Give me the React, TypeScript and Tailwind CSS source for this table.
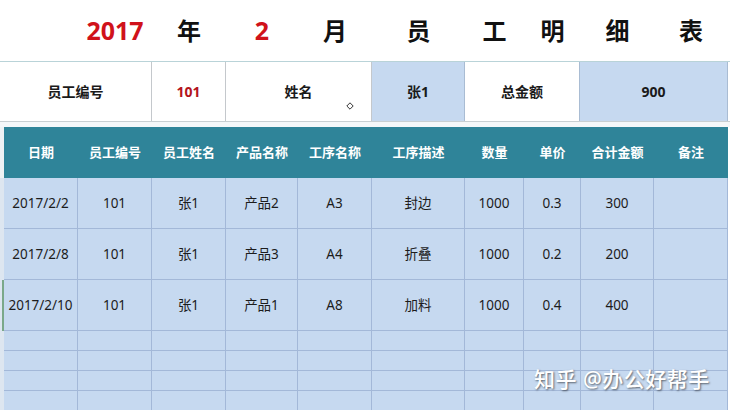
import { Fragment } from "react";

const grid =
  "grid grid-cols-[4px_74px_74px_74px_72px_74px_93px_59px_57px_73px_74px_2px]";

const headers = ["日期", "员工编号", "员工姓名", "产品名称", "工序名称", "工序描述", "数量", "单价", "合计金额", "备注"];

const rows = [
  ["2017/2/2", "101", "张1", "产品2", "A3", "封边", "1000", "0.3", "300", ""],
  ["2017/2/8", "101", "张1", "产品3", "A4", "折叠", "1000", "0.2", "200", ""],
  ["2017/2/10", "101", "张1", "产品1", "A8", "加料", "1000", "0.4", "400", ""],
];

const title: { text: string; red?: boolean }[] = [
  { text: "" },
  { text: "2017", red: true },
  { text: "年" },
  { text: "2", red: true },
  { text: "月" },
  { text: "员" },
  { text: "工" },
  { text: "明" },
  { text: "细" },
  { text: "表" },
];

const font = { fontFamily: '"Noto Sans", "Noto Sans CJK SC", sans-serif' };

export default function App() {
  return (
    <div className="w-[730px] h-[410px] overflow-hidden bg-white relative" style={font}>
      {/* Title row */}
      <div className={`${grid} h-[62px] border-b border-[#b9d3d8]`}>
        <div />
        {title.map((t, i) => (
          <div
            key={i}
            className={`flex items-center justify-center font-bold ${
              t.red ? "text-[#d0121b] text-[25px]" : "text-[#111] text-[24px]"
            }`}
          >
            {t.text}
          </div>
        ))}
        <div />
      </div>

      {/* Info row */}
      <div className="flex h-[60px] border-b border-[#c8cfd2] text-[14px] font-bold text-[#1a1a1a]">
        <div className="w-[152px] flex items-center justify-center border-r border-[#c4c8cc]">员工编号</div>
        <div className="w-[74px] flex items-center justify-center border-r border-[#c4c8cc] text-[#b3141c]">101</div>
        <div className="w-[146px] flex items-center justify-center border-r border-[#c4c8cc] relative">
          姓名
          <svg className="absolute left-[120px] top-[40px]" width="8" height="8" viewBox="0 0 8 8">
            <path d="M4 0.8 L7.2 4 L4 7.2 L0.8 4 Z" fill="white" stroke="#333" strokeWidth="1" />
          </svg>
        </div>
        <div className="w-[93px] flex items-center justify-center border-r border-[#a9bcd3] bg-[#c6d9f0]">张1</div>
        <div className="w-[115px] flex items-center justify-center border-r border-[#a9bcd3]">总金额</div>
        <div className="w-[148px] flex items-center justify-center border-r border-[#a9bcd3] bg-[#c6d9f0]">900</div>
        <div className="flex-1" />
      </div>

      <div className="h-[5px] bg-[#f4f7f9]" />

      {/* Header row */}
      <div className={`${grid} h-[51px] text-[13px] font-bold text-white`}>
        <div className="bg-[#eef2f4]" />
        {headers.map((h) => (
          <div key={h} className="bg-[#2f8499] flex items-center justify-center">
            {h}
          </div>
        ))}
        <div />
      </div>

      {/* Data rows */}
      {rows.map((r, ri) => (
        <div key={ri} className={`${grid} h-[51px] text-[13.5px] text-[#1c1c1c]`}>
          <div className={`bg-[#dde6f0] ${ri === 2 ? "border-r-2 border-[#7aa88a]" : ""}`} />
          {r.map((c, ci) => (
            <div
              key={ci}
              className="bg-[#c6d9f0] border-r border-b border-[#a3b8d8] flex items-center justify-center"
            >
              {c}
            </div>
          ))}
          <div />
        </div>
      ))}

      {/* Empty rows */}
      {[0, 1, 2, 3].map((ri) => (
        <div key={ri} className={`${grid} h-[20px]`}>
          <div className="bg-[#dde6f0]" />
          {headers.map((h) => (
            <Fragment key={h}>
              <div className="bg-[#c6d9f0] border-r border-b border-[#a3b8d8]" />
            </Fragment>
          ))}
          <div />
        </div>
      ))}

      {/* Watermark */}
      <div
        className="absolute left-[534px] top-[364px] text-[21px] text-white font-medium tracking-[0.5px]"
        style={{ textShadow: "1px 1px 2px rgba(0,0,0,0.55)" }}
      >
        知乎 @办公好帮手
      </div>
    </div>
  );
}
